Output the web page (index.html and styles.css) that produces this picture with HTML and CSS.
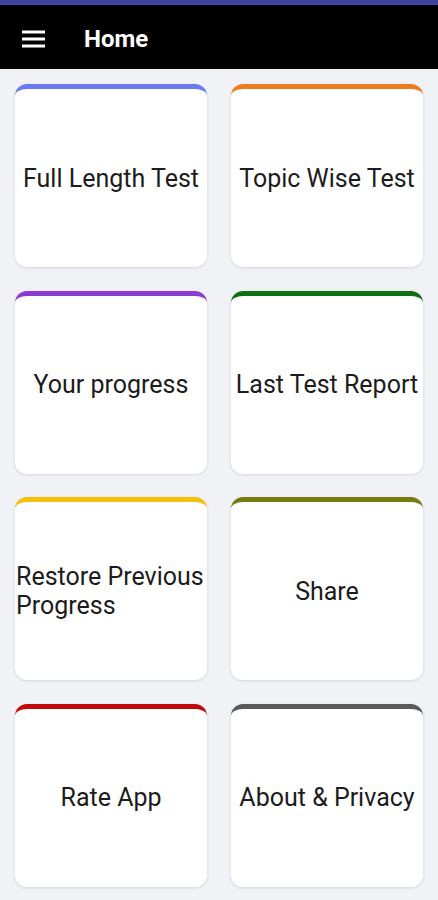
FILE: index.html
```html
<!DOCTYPE html>
<html lang="en">
<head>
    <meta charset="UTF-8">
    <meta name="viewport" content="width=device-width, initial-scale=1.0">
    <title>Home</title>
    <link rel="stylesheet" href="styles.css">
</head>
<body>
    <div class="status-bar"></div>
    <header class="toolbar">
        <svg class="menu-icon" width="24" height="18" viewBox="0 0 24 18">
            <path d="M0 0.5h23v3H0zM0 7.5h23v3H0zM0 14.5h23v3H0z" fill="#fff"/>
        </svg>
        <h1>Home</h1>
    </header>

    <main class="grid">
        <div class="card blue"><span>Full Length Test</span></div>
        <div class="card orange"><span>Topic Wise Test</span></div>
        <div class="card purple"><span>Your progress</span></div>
        <div class="card green"><span>Last Test Report</span></div>
        <div class="card yellow"><span>Restore Previous Progress</span></div>
        <div class="card olive"><span>Share</span></div>
        <div class="card red"><span>Rate App</span></div>
        <div class="card grey"><span>About &amp; Privacy</span></div>
    </main>
</body>
</html>
```

FILE: styles.css
```css
body {
    margin: 0;
    font-family: Roboto, "Noto Sans", Arial, sans-serif;
    background-color: #f1f2f6;
}
.status-bar {
    height: 5px;
    background-color: #3c43a3;
}
.toolbar {
    height: 64px;
    background-color: #000;
    display: flex;
    align-items: center;
    padding-left: 22px;
    padding-top: 3px;
    box-sizing: border-box;
}
.menu-icon {
    display: block;
}
.toolbar h1 {
    margin: 0 0 0 38px;
    color: #fff;
    font-size: 24px;
    font-weight: bold;
}
.grid {
    display: grid;
    grid-template-columns: 1fr 1fr;
    column-gap: 24px;
    row-gap: 23.5px;
    padding: 15px 15px;
}
.card {
    height: 178px;
    background-color: #fff;
    border-top: 5px solid;
    border-radius: 12px;
    box-shadow: 0 1px 3px rgba(0, 0, 0, 0.12);
    display: flex;
    align-items: center;
    justify-content: center;
    font-size: 25px;
    color: #1c1c1c;
    line-height: 29px;
}
.card span {
    padding: 0 1px;
}
.blue { border-top-color: #6a7af2; }
.orange { border-top-color: #f07b1d; }
.purple { border-top-color: #8b3bd1; }
.green { border-top-color: #0f700f; }
.yellow { border-top-color: #f5bf0c; }
.olive { border-top-color: #7a7a12; }
.red { border-top-color: #c20a0a; }
.grey { border-top-color: #5a5a5a; }
```
